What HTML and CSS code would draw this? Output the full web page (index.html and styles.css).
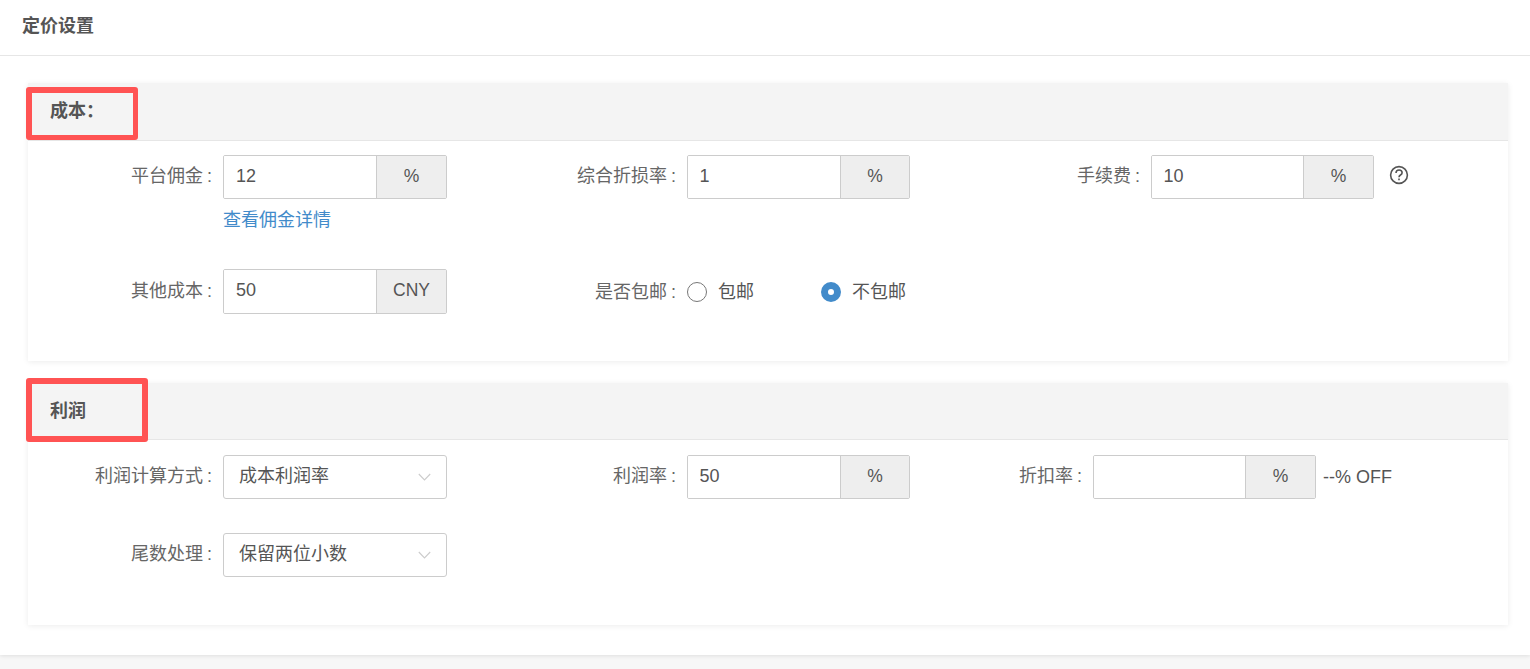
FILE: index.html
```html
<!DOCTYPE html>
<html lang="zh">
<head>
<meta charset="utf-8">
<title>定价设置</title>
<link rel="stylesheet" href="styles.css">
</head>
<body>
<main class="page">
  <header class="page-head">定价设置</header>
  <div class="page-body">
    <section class="card card-cost">
      <h2 class="card-head">成本：</h2>
      <div class="card-body">
        <div class="row row-a">
          <div class="field">
            <label class="label">平台佣金 :</label>
            <div class="stack">
              <div class="group"><input class="input" value="12"><span class="addon">%</span></div>
              <a class="link" href="#">查看佣金详情</a>
            </div>
          </div>
          <div class="field">
            <label class="label">综合折损率 :</label>
            <div class="group"><input class="input" value="1"><span class="addon">%</span></div>
          </div>
          <div class="field">
            <label class="label">手续费 :</label>
            <div class="group"><input class="input" value="10"><span class="addon">%</span></div>
            <svg class="help" width="20" height="20" viewBox="0 0 20 20" fill="none" stroke="#555" stroke-width="1.6"><circle cx="10" cy="10" r="8.4"/><path d="M7 8c0-1.8 1.3-3 3.1-3s3 1.1 3 2.7c0 1.1-.7 1.8-1.6 2.3-.9.6-1.5 1.1-1.5 2.3"/><path d="M10 13.6v1.7"/></svg>
          </div>
        </div>
        <div class="row row-b">
          <div class="field">
            <label class="label">其他成本 :</label>
            <div class="group group-tall"><input class="input" value="50"><span class="addon">CNY</span></div>
          </div>
          <div class="field field-center">
            <label class="label">是否包邮 :</label>
            <div class="radios">
              <span class="radio"><i class="dot"></i>包邮</span>
              <span class="radio"><i class="dot dot-on"></i>不包邮</span>
            </div>
          </div>
        </div>
      </div>
    </section>
    <section class="card card-profit">
      <h2 class="card-head">利润</h2>
      <div class="card-body">
        <div class="row row-c">
          <div class="field">
            <label class="label">利润计算方式 :</label>
            <div class="select">成本利润率<svg class="chev" width="13" height="8" viewBox="0 0 13 8" fill="none" stroke="#ccc" stroke-width="1.1"><path d="M.8 1l5.7 6 5.7-6"/></svg></div>
          </div>
          <div class="field">
            <label class="label">利润率 :</label>
            <div class="group"><input class="input" value="50"><span class="addon">%</span></div>
          </div>
          <div class="field">
            <label class="label label-short">折扣率 :</label>
            <div class="group"><input class="input" value=""><span class="addon">%</span></div>
            <span class="off">--% OFF</span>
          </div>
        </div>
        <div class="row">
          <div class="field">
            <label class="label">尾数处理 :</label>
            <div class="select">保留两位小数<svg class="chev" width="13" height="8" viewBox="0 0 13 8" fill="none" stroke="#ccc" stroke-width="1.1"><path d="M.8 1l5.7 6 5.7-6"/></svg></div>
          </div>
        </div>
      </div>
    </section>
  </div>
  <span class="mark mark-cost"></span>
  <span class="mark mark-profit"></span>
</main>
</body>
</html>
```
FILE: styles.css
```css
* { box-sizing: border-box; }
html, body { margin: 0; height: 669px; overflow: hidden; }
body {
  background: #f7f7f7;
  font-family: "Liberation Sans", "Noto Sans CJK SC", sans-serif;
  font-size: 18px;
  color: #555;
}
.page {
  position: relative;
  height: 655px;
  background: #fff;
  box-shadow: 0 1px 4px rgba(0, 0, 0, .1);
}
.page-head {
  height: 56px;
  padding: 0 22px;
  line-height: 52px;
  font-weight: 700;
  color: #555;
  border-bottom: 1px solid #e6e6e6;
}
.page-body { padding: 27px 22px 0 28px; }
.card {
  background: #fff;
  box-shadow: 0 1px 6px rgba(0, 0, 0, .08);
}
.card-cost { height: 278px; margin-bottom: 22px; }
.card-profit { height: 242px; }
.card-head {
  margin: 0;
  height: 58px;
  padding: 0 22px;
  line-height: 56px;
  font-size: 18px;
  font-weight: 700;
  color: #555;
  background: #f4f4f4;
  border-bottom: 1px solid #e6e6e6;
}
.card-profit .card-head { height: 57px; line-height: 57px; }
.card-body { padding-top: 14px; }
.row {
  display: grid;
  grid-template-columns: 464px 464px 1fr;
}
.row-a { height: 114px; }
.row-b { height: 45px; }
.row-c { height: 79px; padding-top: 1px; }
.field { display: flex; align-items: flex-start; }
.field-center { align-items: center; }
.label {
  flex: none;
  width: 195px;
  height: 44px;
  padding-right: 11px;
  line-height: 42px;
  word-spacing: -1px;
  text-align: right;
  color: #666;
}
.label-short { width: 137px; }
.row-b .label { line-height: 44px; }
.field-center .label { height: auto; line-height: 24px; }
.group {
  display: flex;
  flex: none;
  width: 223px;
  height: 44px;
  border: 1px solid #ccc;
  border-radius: 2px;
  overflow: hidden;
}
.field:first-child .group { width: 224px; }
.group-tall { height: 45px; }
.input {
  flex: 1;
  min-width: 0;
  height: 100%;
  padding: 0 11.5px 2px;
  border: 0;
  outline: 0;
  font: inherit;
  color: #555;
  background: #fff;
}
.field:first-child .input { padding-left: 12px; }
.addon {
  flex: none;
  width: 69px;
  line-height: 40px;
  font-size: 17.5px;
  text-align: center;
  color: #555;
  background: #eee;
  border-left: 1px solid #ccc;
}
.field:first-child .addon,
.field:nth-child(3) .addon { width: 70px; }
.group-tall .addon { line-height: 41px; }
.stack { display: flex; flex-direction: column; }
.link {
  margin-top: 8px;
  line-height: 26px;
  color: #428bca;
  text-decoration: none;
}
.help { margin: 10px 0 0 15px; }
.off { margin-left: 7px; line-height: 44px; color: #555; }
.radios { display: flex; align-items: center; }
.radio {
  display: flex;
  align-items: center;
  width: 134px;
  line-height: 24px;
  color: #555;
}
.dot {
  flex: none;
  width: 20px;
  height: 20px;
  margin-right: 11px;
  border: 1px solid #777;
  border-radius: 50%;
  background: #fff;
}
.dot-on {
  border: 7px solid #428bca;
  background: #fff;
}
.select {
  display: flex;
  flex: none;
  justify-content: space-between;
  width: 224px;
  height: 44px;
  padding: 0 15px;
  line-height: 40px;
  color: #555;
  border: 1px solid #ccc;
  border-radius: 3px;
}
.chev { margin: 17px 0 0 0; }
.mark {
  position: absolute;
  left: 26px;
  border: solid #ff5353;
  border-radius: 3px;
}
.mark-cost { top: 87px; width: 112px; height: 53px; border-width: 6px 5px 5px 6px; }
.mark-profit { top: 378px; width: 122px; height: 64px; border-width: 6px 6px 6px 6px; }
```
